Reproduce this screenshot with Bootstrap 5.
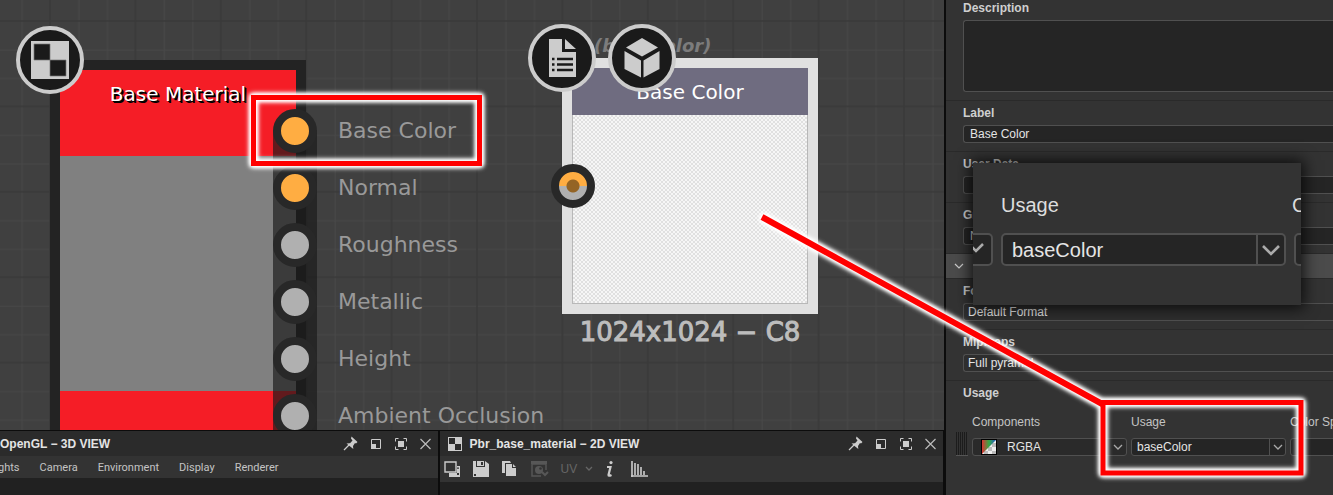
<!DOCTYPE html>
<html lang="en">
<head>
<meta charset="utf-8">
<meta name="viewport" content="width=device-width, initial-scale=1">
<title>Pbr_base_material</title>
<link href="https://cdn.jsdelivr.net/npm/bootstrap@5.3.0/dist/css/bootstrap.min.css" rel="stylesheet">
<style>
  :root { --panel: #333; --field: #252525; --line: #505050; --soft: #ccc; }
  body { background: #212121; color: #ddd; font: 12px/16px "Liberation Sans", "Noto Sans CJK JP", sans-serif; overflow: hidden; }
  button, select, input, textarea { font: inherit; color: inherit; }
  .workspace { min-width: 0; }

  /* node graph */
  .graph { background: #404040; overflow: hidden; border-bottom: 1px solid #0c0c0c; font-family: "DejaVu Sans", sans-serif; }
  .node { position: absolute; border: 10px solid #232323; width: 256px; }
  .node-title { font-size: 20px; line-height: 24px; color: #fff; text-align: center; }
  .node-material { left: 50px; top: 60px; height: 420px; background: linear-gradient(#f51d26 86px, #808080 86px, #808080 321px, #f51d26 321px); }
  .node-material .node-title { padding-top: 12px; text-shadow: 1px 1px #000, 2px 2px #000; }
  .node-output { left: 562px; top: 58px; height: 256px; border-color: #e0e0e0; background: #e0e0e0; }
  .node-output .node-title { background: #6f6c80; height: 47px; padding-top: 12px; }
  .preview { border: 1px solid #b8b8b8; border-top: 0; background: repeating-conic-gradient(#e0e0e0 0 25%, #f6f6f6 0 50%) 0 0 / 4px 4px; }
  .node-ident { position: absolute; left: 594px; top: 34px; font-size: 18px; line-height: 24px; font-style: italic; font-weight: bold; color: #7c7c7c; }
  .node-size { position: absolute; left: 562px; top: 316px; width: 256px; text-align: center; font-size: 26px; line-height: 32px; color: #bdbdbd; -webkit-text-stroke: 1px #bdbdbd; }
  .round-badge { position: absolute; width: 68px; height: 68px; border: 4px solid #ccc; border-radius: 50%; background: #1a1a1a; }
  .ports { position: absolute; left: 273px; top: 102px; }
  .ports::before { content: ""; position: absolute; left: 0; top: 28px; bottom: 0; width: 44px; background: rgba(26, 26, 26, .67); }
  .ports li { height: 57px; gap: 21px; font-size: 22px; color: #999; white-space: nowrap; position: relative; }
  .port-dot { width: 44px; height: 44px; border: 8px solid #282828; border-radius: 50%; background: #b0b0b0; }
  .port-on { background: #ffad42; }
  .port-in { position: absolute; left: 551px; top: 164px; background: radial-gradient(circle, #946425 6px, transparent 7px), linear-gradient(#ffad42 50%, #b0b0b0 50%); }

  /* docked views */
  .dock { height: 64px; background: #0c0c0c; gap: 2px; padding-right: 1px; }
  .view { background: #212121; min-width: 0; overflow: hidden; }
  .view-title { height: 25px; background: #2b2b2b; font-weight: bold; color: #e4e4e4; }
  .view-title h2 { font: inherit; margin: 0; white-space: nowrap; }
  .view-bar { background: var(--panel); }
  .menu-bar { height: 22px; gap: 20px; font-family: Roboto, sans-serif; font-size: 11px; padding-top: 2px; }
  .menu-bar a { color: #c4c4c4; text-decoration: none; }
  .menu-bar a:first-child { margin-left: -2px; }
  .tool-bar { height: 26px; }
  .flat { background: none; border: 0; padding: 0; display: flex; color: var(--soft); }

  /* properties */
  .props { width: 389px; background: var(--panel); border-left: 2px solid #0c0c0c; overflow: hidden; }
  .field-group { border-top: 1px solid #2a2a2a; padding: 4px 0 8px 17px; }
  .field-group label, .group-label { display: block; font-weight: bold; color: #cfcfcf; margin-bottom: 4px; }
  .field { display: block; width: 100%; height: 18px; line-height: 16px; padding: 0 6px; border: 1px solid var(--line); border-right: 0; border-radius: 3px 0 0 3px; background: var(--field); color: #e4e4e4; appearance: none; }
  .field-plain { background: #2e2e2e; padding-left: 4px; }
  textarea.field { height: 72px; resize: none; }
  .band { height: 25px; background: #4b4b4b; border-top: 1px solid #2a2a2a; padding-left: 8px; }
  .usage-row { padding: 9px 0 0 10px; }
  .usage-col { width: 155px; flex: none; }
  .usage-label { color: #c4c4c4; }
  .combo { display: flex; height: 18px; border: 1px solid var(--line); border-radius: 3px; background: var(--field); overflow: hidden; }
  .combo select { appearance: none; background: none; border: 0; padding: 0 0 0 5px; min-width: 0; flex: 1; color: #e4e4e4; line-height: 16px; }
  .combo-arrow { width: 16px; border-left: 1px solid var(--line); display: flex; align-items: center; justify-content: center; color: #b0b0b0; }
  .grip { width: 12px; height: 24px; flex: none; border-bottom: 1px solid #555; background: repeating-linear-gradient(90deg, #1c1c1c 0 1px, #333 1px 2px); }

  /* magnified inset */
  .inset { position: absolute; left: 27px; top: 163px; width: 328px; height: 142px; background: var(--panel); box-shadow: 0 0 14px 3px rgba(0, 0, 0, .75); overflow: hidden; font-size: 20px; line-height: 28px; }
  .inset .combo { height: 33px; border-width: 2px; border-radius: 5px; }
  .inset .combo select { font-size: 20px; line-height: 28px; padding-left: 9px; }
  .inset .combo-arrow { width: 28px; border-left-width: 2px; }
  .marks { position: absolute; left: 0; top: 0; width: 100%; height: 100%; pointer-events: none; filter: drop-shadow(0 0 2px #fff) drop-shadow(0 0 2px #fff) drop-shadow(0 0 1px #fff); }
</style>
</head>
<body>
<div class="d-flex vh-100 position-relative">
  <main class="workspace flex-fill d-flex flex-column">
    <section class="graph flex-fill position-relative" aria-label="Graph">
      <svg class="position-absolute w-100 h-100" aria-hidden="true">
        <defs><pattern id="grid" x="49" y="20" width="85.4" height="85.4" patternUnits="userSpaceOnUse">
          <path d="M30 0V85.4M58.5 0V85.4M0 30H85.4M0 58.5H85.4" stroke="#484848"/>
          <path d="M1 0V85.4M0 1H85.4" stroke="#393939" stroke-width="1.6"/>
        </pattern></defs>
        <rect width="100%" height="100%" fill="url(#grid)"/>
      </svg>

      <div class="node node-material"><div class="node-title">Base Material</div></div>
      <ul class="ports list-unstyled m-0">
        <li class="d-flex align-items-center"><span class="port-dot port-on"></span>Base Color</li>
        <li class="d-flex align-items-center"><span class="port-dot port-on"></span>Normal</li>
        <li class="d-flex align-items-center"><span class="port-dot"></span>Roughness</li>
        <li class="d-flex align-items-center"><span class="port-dot"></span>Metallic</li>
        <li class="d-flex align-items-center"><span class="port-dot"></span>Height</li>
        <li class="d-flex align-items-center"><span class="port-dot"></span>Ambient Occlusion</li>
      </ul>
      <span class="round-badge" style="left:16px;top:26px">
        <svg width="60" height="60" viewBox="0 0 60 60"><path fill="#ccc" d="M11 11h38v38H11z"/><path fill="#1a1a1a" stroke="#777" stroke-width=".7" d="M14 14h16v16H14zM30 30h16v16H30z"/></svg>
      </span>

      <div class="node-ident">(baseColor)</div>
      <div class="node node-output d-flex flex-column">
        <div class="node-title">Base Color</div>
        <div class="preview flex-fill"></div>
      </div>
      <span class="port-dot port-in"></span>
      <div class="node-size">1024x1024 − C8</div>
      <span class="round-badge" style="left:528px;top:24px">
        <svg width="60" height="60" viewBox="0 0 60 60"><path fill="#ccc" d="M17 11h13v13h14v25H17zM33 11v10h11z"/><path stroke="#1a1a1a" stroke-width="2.4" d="M20 31h2.500M25 31h16M20 36.500h2.500M25 36.500h16M20 42h2.500M25 42h16"/></svg>
      </span>
      <span class="round-badge" style="left:608px;top:24px">
        <svg width="60" height="60" viewBox="0 0 60 60"><path fill="#ccc" d="M30 10l16 9.500-16 9-16-9zM12.500 23L29 32.500V49.500L12.500 41zM47.500 23L31.500 32.500V49.500L47.500 41z"/></svg>
      </span>
    </section>

    <div class="dock d-flex">
      <section class="view" style="width:46.400%">
        <div class="view-title d-flex align-items-center justify-content-between pe-1">
          <h2>OpenGL − 3D VIEW</h2>
          <div class="d-flex align-items-center gap-2">
            <button class="flat" aria-label="Pin"><svg width="17" height="17"><use href="#i-pin"/></svg></button>
            <button class="flat" aria-label="Float"><svg width="17" height="17"><use href="#i-float"/></svg></button>
            <button class="flat" aria-label="Maximize"><svg width="17" height="17"><use href="#i-max"/></svg></button>
            <button class="flat" aria-label="Close"><svg width="17" height="17"><use href="#i-close"/></svg></button>
          </div>
        </div>
        <nav class="view-bar menu-bar d-flex align-items-center">
          <a href="#">ghts</a><a href="#">Camera</a><a href="#">Environment</a><a href="#">Display</a><a href="#">Renderer</a>
        </nav>
      </section>
      <section class="view flex-fill">
        <div class="view-title d-flex align-items-center justify-content-between ps-2 pe-1">
          <div class="d-flex align-items-center gap-2">
            <svg width="14" height="14"><path fill="#ccc" d="M0 0h14v14H0z"/><path fill="#2b2b2b" d="M1 1h6v6H1zM7 7h6v6H7z"/></svg>
            <h2>Pbr_base_material − 2D VIEW</h2>
          </div>
          <div class="d-flex align-items-center gap-2">
            <button class="flat" aria-label="Pin"><svg width="17" height="17"><use href="#i-pin"/></svg></button>
            <button class="flat" aria-label="Float"><svg width="17" height="17"><use href="#i-float"/></svg></button>
            <button class="flat" aria-label="Maximize"><svg width="17" height="17"><use href="#i-max"/></svg></button>
            <button class="flat" aria-label="Close"><svg width="17" height="17"><use href="#i-close"/></svg></button>
          </div>
        </div>
        <div class="view-bar tool-bar d-flex align-items-center ps-1">
          <button class="flat" aria-label="Views"><svg width="17" height="16"><path fill="none" stroke="#ccc" stroke-width="1.400" d="M1 1h11v10H1z"/><path fill="#ccc" d="M13 5h3v11H5v-4h8z"/><path fill="#333" d="M13 6.500h2v1.200h-2zM13 12h2v2h-2z"/></svg></button>
          <button class="flat ms-2 ps-1" aria-label="Save"><svg width="17" height="16"><path fill="#ccc" d="M0 0h3v6h9V0l4 3v13H0z"/><path fill="#ccc" d="M4 0h7v5H4z"/><path fill="#333" d="M8 1h2v3H8zM1 13h2v2H1zM3 0h1v6H3zM3 5h9v1H3z"/></svg></button>
          <button class="flat ms-2 ps-1" aria-label="Copy"><svg width="17" height="16"><path fill="#ccc" d="M0 0h8l1 2H3v10H0zM4 3h6v4h4v8H4zM11 3l3 3h-3z"/></svg></button>
          <button class="flat ms-2 ps-1" aria-label="Channel"><svg width="18" height="16"><path fill="none" stroke="#575757" stroke-width="1.400" d="M10 15H1V3h14v6M1 1h15"/><path fill="#575757" d="M0 0h16v3H0z"/><circle cx="8" cy="9" r="4" fill="#575757"/><circle cx="9.500" cy="7.500" r="1.300" fill="#333"/><path fill="none" stroke="#575757" stroke-width="2" d="M11 11l3 3 3-3"/></svg></button>
          <button class="flat ms-2 ps-1 align-items-center gap-2" style="color:#666" aria-label="UV">UV<svg width="8" height="6"><path fill="none" stroke="#666" stroke-width="1.300" d="M1 1l3 3 3-3"/></svg></button>
          <button class="flat ms-2 ps-1" aria-label="Information"><svg width="10" height="16"><circle cx="6" cy="1.600" r="1.600" fill="#ccc"/><path fill="none" stroke="#ccc" stroke-width="2.200" d="M2 6h3.500L3.500 14q0 1.500 3 0"/></svg></button>
          <button class="flat ms-3" aria-label="Histogram"><svg width="17" height="16"><path fill="none" stroke="#ccc" stroke-width="1.600" d="M1 0V16M4 2V14M7 3V14M10 6V14M13 10V14M0 15h17"/></svg></button>
        </div>
      </section>
    </div>
  </main>

  <aside class="props flex-shrink-0 position-relative" aria-label="Properties">
    <div class="field-group border-0 pt-0"><label for="desc">Description</label><textarea id="desc" class="field"></textarea></div>
    <div class="field-group"><label for="lbl">Label</label><input id="lbl" class="field" value="Base Color"></div>
    <div class="field-group"><label for="udata">User Data</label><input id="udata" class="field"></div>
    <div class="field-group"><label for="grp">Group</label><input id="grp" class="field" value="None"></div>
    <div class="band d-flex align-items-center"><svg width="10" height="8"><path fill="none" stroke="#ccc" stroke-width="1.200" d="M1 2l4 4 4-4"/></svg></div>
    <div class="field-group"><label for="fmt">Format</label><select id="fmt" class="field field-plain"><option>Default Format</option></select></div>
    <div class="field-group"><label for="mip">Mipmaps</label><select id="mip" class="field field-plain"><option>Full pyramid</option></select></div>
    <div class="field-group pb-0"><div class="group-label">Usage</div></div>
    <div class="usage-row d-flex gap-1">
      <span class="grip mt-3 align-self-end"></span>
      <div class="usage-col"><label class="usage-label d-block mb-2" for="comp">Components</label>
        <div class="combo" style="background:#2a2a2a"><svg class="flex-shrink-0 ms-2" width="16" height="16"><defs><linearGradient id="rgb"><stop stop-color="#d33"/><stop offset=".5" stop-color="#3a4"/><stop offset="1" stop-color="#25c"/></linearGradient></defs><path d="M0 0h16v16H0z"/><path fill="#eee" d="M1 1h14v14H1z"/><path fill="#bbb" d="M11 4h4v4h-4zM7 8h4v4H7zM11 12h4v3h-4zM3 12h4v3H3z"/><path fill="url(#rgb)" d="M1 1h14L1 15z"/></svg>
          <select id="comp" style="padding-left:10px"><option>RGBA</option></select><span class="combo-arrow border-0"><svg width="10" height="8"><use href="#i-down"/></svg></span></div></div>
      <div class="usage-col"><label class="usage-label d-block mb-2" for="use">Usage</label>
        <div class="combo"><select id="use"><option>baseColor</option></select><span class="combo-arrow"><svg width="10" height="8"><use href="#i-down"/></svg></span></div></div>
      <div class="usage-col"><label class="usage-label d-block mb-2" for="space">Color Space</label>
        <div class="combo"><select id="space"><option></option></select></div></div>
    </div>

    <div class="inset">
      <div class="d-flex text-nowrap" style="padding:28px 0 0 28px"><label class="flex-shrink-0" for="use2" style="width:291px">Usage</label><span>Color</span></div>
      <div class="d-flex gap-2" style="padding-top:14px">
        <div class="combo flex-shrink-0" style="width:20px;border-left:0;border-radius:0 5px 5px 0"><svg width="16" height="29" viewBox="2 -10 16 29"><path fill="none" stroke="#aaa" stroke-width="2.500" d="M0 1l5 5 7-7"/></svg></div>
        <div class="combo flex-shrink-0" style="width:285px"><select id="use2"><option>baseColor</option></select><span class="combo-arrow"><svg width="20" height="16" viewBox="0 0 10 8"><use href="#i-down" width="10" height="8"/></svg></span></div>
        <div class="combo flex-shrink-0" style="width:60px"></div>
      </div>
    </div>
  </aside>

  <svg class="marks" fill="none" stroke="#f00" aria-hidden="true">
    <path stroke-width="6" d="M762 217L1104 405"/>
    <path stroke-width="5" d="M253.500 97.500H479.500V163.500H253.500ZM1103 402.500H1301V473H1103Z"/>
  </svg>
</div>

<svg width="0" height="0" class="position-absolute" aria-hidden="true">
  <symbol id="i-pin" viewBox="0 0 17 17"><path fill="#ccc" d="M9.500 1.500l6 5.500-1.500 1.500-1-.5-2 3 .3 3L4.500 8.500l3.500-.3 2.500-2.700-1.500-2z"/><path stroke="#ccc" stroke-width="1.300" d="M2 15l6-6"/></symbol>
  <symbol id="i-float" viewBox="0 0 17 17"><path fill="none" stroke="#ccc" d="M4.500 4.500h9v9h-9z"/><path fill="#ccc" d="M4 9h5v5H4z"/></symbol>
  <symbol id="i-max" viewBox="0 0 17 17"><path fill="none" stroke="#ccc" d="M3.500 6.500v-3h3M11.500 3.500h3v3M14.500 11.500v3h-3M6.500 14.500h-3v-3"/><path fill="#ccc" d="M6 6h6v6H6z"/></symbol>
  <symbol id="i-close" viewBox="0 0 17 17"><path stroke="#bbb" stroke-width="1.200" d="M3.500 4l10 10M13.500 4l-10 10"/></symbol>
  <symbol id="i-down" viewBox="0 0 10 8"><path fill="none" stroke="#aaa" stroke-width="1.300" d="M1 2l4 4 4-4"/></symbol>
</svg>
<script src="https://cdn.jsdelivr.net/npm/bootstrap@5.3.0/dist/js/bootstrap.bundle.min.js"></script>
</body>
</html>
